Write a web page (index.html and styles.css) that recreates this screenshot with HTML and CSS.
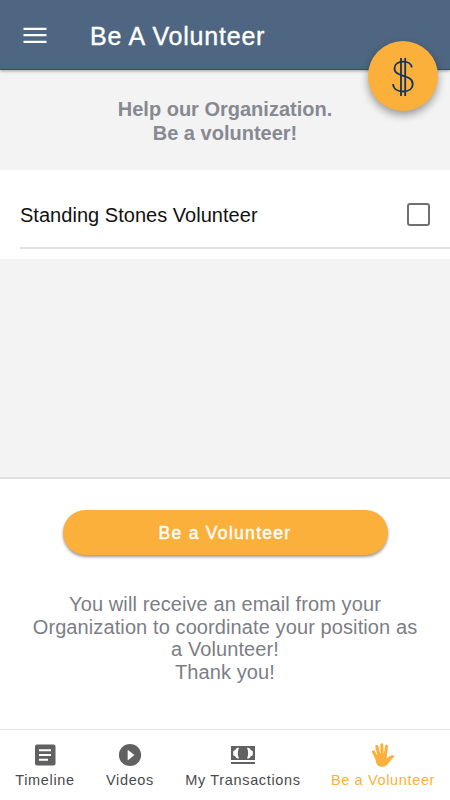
FILE: index.html
```html
<!DOCTYPE html>
<html lang="en">
<head>
  <meta charset="UTF-8">
  <meta name="viewport" content="width=device-width, initial-scale=1.0">
  <title>Be A Volunteer</title>
  <link rel="stylesheet" href="styles.css">
</head>
<body>
  <header class="toolbar">
    <button class="menu-button" aria-label="Menu">
      <svg width="24" height="18" viewBox="0 0 24 18">
        <path d="M0.5 1.8h23M0.5 8.2h23M0.5 14.8h23" stroke="#fff" stroke-width="2.3"/>
      </svg>
    </button>
    <h1>Be A Volunteer</h1>
    <button class="donate" aria-label="Donate">
      <svg width="24" height="40" viewBox="0 0 24 40" fill="none" stroke="#14345c" stroke-width="1.8">
        <path d="M10 1v38M14.2 1v38"/>
        <path d="M20.7 10.5C20.5 6.8 17 4.6 12.2 4.6c-5 0-8.7 2.5-8.7 6.8 0 9.4 18.2 5.5 18.2 15.5 0 4.9-4.2 7.6-9.6 7.6-5.7 0-9.8-2.6-10-7.5"/>
      </svg>
    </button>
  </header>

  <main class="content">
    <h2 class="intro">Help our Organization.<br>Be a volunteer!</h2>
    <div class="list">
      <label class="item">
        <span>Standing Stones Volunteer</span>
        <input type="checkbox" class="check">
      </label>
    </div>
  </main>

  <section class="action">
    <button class="submit">Be a Volunteer</button>
    <p>You will receive an email from your Organization to coordinate your position as a&nbsp;Volunteer!<br>Thank you!</p>
  </section>

  <nav class="tabs">
    <a class="tab timeline">
      <svg width="24" height="24" viewBox="0 0 24 24">
        <rect x="2" y="1.5" width="20.5" height="21" rx="2" fill="#616161"/>
        <path d="M6 7.3h12M6 12h12M6 16.8h9" stroke="#fff" stroke-width="2"/>
      </svg>
      <span>Timeline</span>
    </a>
    <a class="tab videos">
      <svg width="24" height="24" viewBox="0 0 24 24">
        <circle cx="12" cy="12" r="11.1" fill="#616161"/>
        <path d="M9.7 6.8v10.6l6.7-5.3z" fill="#fff"/>
      </svg>
      <span>Videos</span>
    </a>
    <a class="tab transactions">
      <svg width="26" height="24" viewBox="0 0 26 24">
        <path d="M1 3h24v14H1zM1 19h24v2H1z" fill="#616161"/>
        <path d="M9 4.8C7 4.8 5.8 5.3 5.5 6.8L3.2 8.2v4l2.3 1.4c.3 1.5 1.5 2 3.5 2-1.5-3.4-1.5-7.4 0-10.8zM17 4.8c2 0 3.2.5 3.5 2l2.3 1.4v4l-2.3 1.4c-.3 1.5-1.5 2-3.5 2 1.5-3.4 1.5-7.4 0-10.8z" fill="#fff"/>
      </svg>
      <span>My Transactions</span>
    </a>
    <a class="tab volunteer active">
      <svg width="24" height="24" viewBox="0 0 24 24">
        <path d="M5.6 15 2.5 8.8M8.2 13 5.8 3.4M11.2 12 10.8 1.7M14.2 13l1.3-9.6" stroke="#fbb03b" stroke-width="3.1" stroke-linecap="round"/>
        <path d="M4 14 7 10.5l8.7 0V15l4.5-2.5c2-.9 3.9.2 2.7 1.5-2.2 1.8-3.5 3.9-5.3 6.3-1.6 2.4-3.6 3.5-6.6 3.5-3.6 0-5.4-1.8-6-4.8z" fill="#fbb03b"/>
      </svg>
      <span>Be a Volunteer</span>
    </a>
  </nav>
</body>
</html>
```

FILE: styles.css
```css
* {
  box-sizing: border-box;
}
body {
  margin: 0;
  height: 800px;
  display: flex;
  flex-direction: column;
  overflow: hidden;
  background: #fff;
  font-family: "Liberation Sans", Arial, sans-serif;
}
button {
  border: none;
  padding: 0;
  font-family: inherit;
  cursor: pointer;
}
.toolbar {
  position: relative;
  z-index: 1;
  flex: none;
  display: flex;
  height: 70px;
  padding-left: 23px;
  background: #4e6681;
  border-bottom: 1px solid #28527a;
  box-shadow: 0 1px 3px rgba(0, 0, 0, 0.35);
}
.menu-button {
  width: 24px;
  height: 18px;
  margin-top: 27px;
  background: none;
}
.menu-button svg {
  display: block;
}
.toolbar h1 {
  margin: 22px 0 0 43px;
  font-size: 25px;
  line-height: 29px;
  font-weight: 400;
  letter-spacing: 0.8px;
  color: #fff;
  -webkit-text-stroke: 0.4px #fff;
}
/* floats over the edge of the toolbar */
.donate {
  position: absolute;
  top: 41px;
  right: 12px;
  display: flex;
  align-items: center;
  justify-content: center;
  width: 70px;
  height: 70px;
  padding-top: 2px;
  border-radius: 50%;
  background: #fbb03b;
  box-shadow: 0 4px 9px rgba(0, 0, 0, 0.38);
}
.content {
  flex: none;
  height: 409px;
  background: #f3f3f3;
  border-bottom: 2px solid #dfdfdf;
}
.intro {
  height: 100px;
  margin: 0;
  padding-top: 27px;
  font-size: 20px;
  line-height: 24px;
  text-align: center;
  color: #868991;
}
.list {
  height: 89px;
  padding-left: 20px;
  background: #fff;
}
.item {
  display: flex;
  align-items: center;
  justify-content: space-between;
  height: 79px;
  padding: 14px 20px 0 0;
  border-bottom: 2px solid #e2e2e2;
  font-size: 20px;
  letter-spacing: 0.03px;
  color: #111;
}
.check {
  appearance: none;
  width: 23px;
  height: 23px;
  margin: 0 0 3px;
  border: 2px solid #707070;
  border-radius: 3px;
}
.action {
  flex: 1;
  display: flex;
  flex-direction: column;
  align-items: center;
  padding-top: 31px;
}
.submit {
  width: 325px;
  height: 45px;
  padding-top: 1px;
  border-radius: 23px;
  background: #fbb03b;
  box-shadow: 0 2px 3px rgba(0, 0, 0, 0.4);
  font-size: 17.5px;
  letter-spacing: 1.3px;
  color: #fff;
  -webkit-text-stroke: 0.4px #fff;
}
.action p {
  width: 396px;
  margin: 38px 0 0;
  font-size: 20px;
  line-height: 22.5px;
  letter-spacing: 0.1px;
  text-align: center;
  color: #7c7e86;
}
.tabs {
  flex: none;
  display: flex;
  height: 71px;
  border-top: 1px solid #e4e4e4;
}
.tab {
  display: flex;
  flex-direction: column;
  align-items: center;
  padding-top: 13px;
  font-size: 14.5px;
  line-height: 18px;
  letter-spacing: 0.65px;
  white-space: nowrap;
  color: #4a4a4a;
}
.tab svg {
  display: block;
  height: 24px;
  margin-bottom: 4px;
}
.timeline {
  width: 90px;
}
.videos {
  width: 80px;
}
.transactions {
  width: 146px;
}
.volunteer {
  width: 134px;
}
.active {
  color: #fbb03b;
}
```
